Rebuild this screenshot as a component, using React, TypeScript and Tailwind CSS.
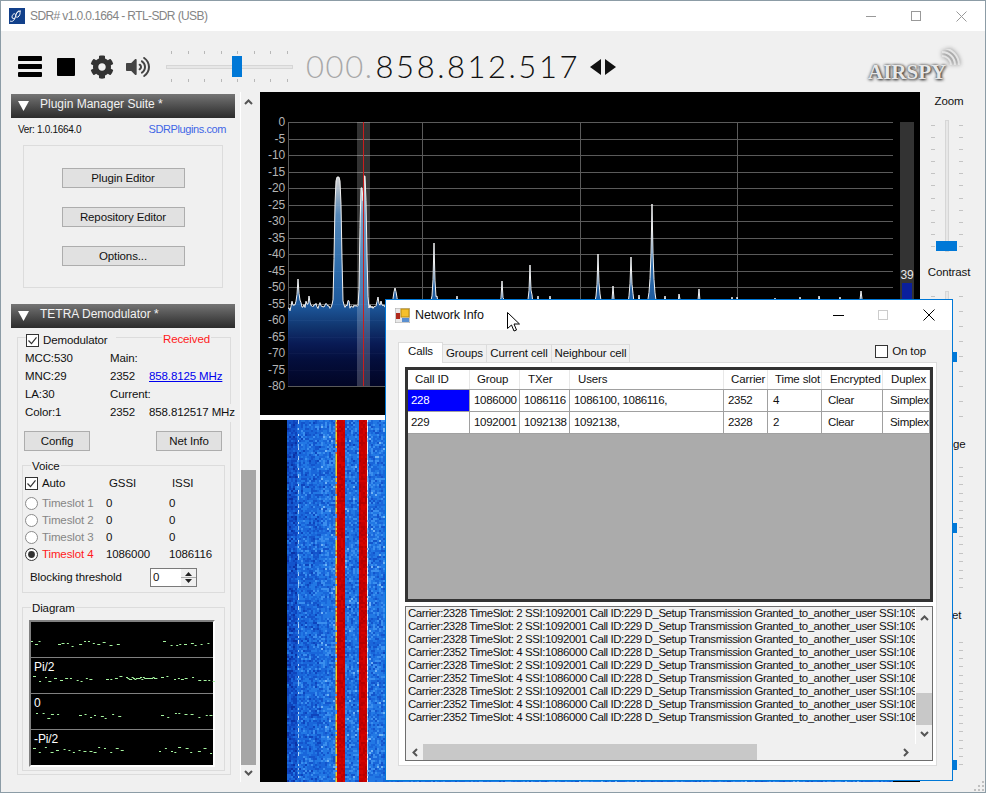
import type { ReactNode } from "react";
import { FaCog, FaVolumeUp } from "react-icons/fa";

const DB_LABELS = Array.from({ length: 17 }, (_, i) => -5 * i);
const SPEC_TOP = 30;
const SPEC_STEP = 16.5;

const PEAKS = [
  { x: 298, top: 279, w: 1.2, p: 1 },
  { x: 309, top: 296, w: 0.9, p: 1 },
  { x: 338, top: 177, w: 4, p: 5 },
  { x: 361.5, top: 186, w: 2, p: 3 },
  { x: 364.5, top: 175, w: 2.5, p: 3 },
  { x: 378, top: 297, w: 0.9, p: 1 },
  { x: 395, top: 288, w: 2.2, p: 2 },
  { x: 434, top: 243, w: 1.1, p: 1 },
  { x: 437, top: 296, w: 0.7, p: 1 },
  { x: 457, top: 296, w: 0.8, p: 1 },
  { x: 502, top: 281, w: 0.9, p: 1 },
  { x: 530, top: 265, w: 1.1, p: 1 },
  { x: 538, top: 296, w: 0.7, p: 1 },
  { x: 550, top: 296, w: 0.7, p: 1 },
  { x: 598, top: 254, w: 1.2, p: 1 },
  { x: 613, top: 286, w: 1, p: 1 },
  { x: 631, top: 257, w: 1.3, p: 1 },
  { x: 639, top: 295, w: 0.8, p: 1 },
  { x: 652, top: 204, w: 1.5, p: 1 },
  { x: 665, top: 296, w: 0.8, p: 1 },
  { x: 679, top: 294, w: 0.8, p: 1 },
  { x: 699, top: 289, w: 0.8, p: 1 },
  { x: 732, top: 297, w: 0.6, p: 1 },
  { x: 737, top: 297, w: 0.6, p: 1 },
  { x: 775, top: 298, w: 0.6, p: 1 },
  { x: 800, top: 297, w: 0.8, p: 1 },
  { x: 819, top: 296, w: 0.8, p: 1 },
  { x: 840, top: 297, w: 1, p: 1 },
  { x: 861, top: 291, w: 0.9, p: 1 },
];

const LOG_LINES = [
  "2328", "2328", "2328", "2352", "2328", "2352", "2328", "2352", "2352",
];

const COLUMNS = "grid grid-cols-[62px_50px_50px_154px_44px_54px_61px_47px]";
const CELL_PADDING = ["pl-[3px]", "pl-1", "pl-1", "pl-1", "pl-1", "pl-[5px]", "pl-[6px]", "pl-[7px]"];

function makeRandom(seed: number) {
  let s = seed;
  return () => {
    s = (s * 1664525 + 1013904223) % 4294967296;
    return s / 4294967296;
  };
}

function spectrumPath() {
  const rand = makeRandom(11);
  const points: string[] = [];
  for (let x = 288; x <= 893; x += 1) {
    const bump = rand() < 0.12 ? 4 : 0;
    const floor = 304.5 + rand() * 4 - bump + (x < 292 ? 3 : 0);
    let y = floor;
    for (const peak of PEAKS) {
      const d = Math.abs(x - peak.x) / peak.w;
      y = Math.min(y, floor - (floor - peak.top) * Math.exp(-(d ** peak.p)));
    }
    points.push(`${x} ${(y - 92).toFixed(1)}`);
  }
  return points;
}

function Spectrum() {
  const points = spectrumPath();
  return (
    <svg className="block shrink-0 bg-black" height={323} width={660} viewBox="260 0 660 323">
      <defs>
        <linearGradient id="spec" x1="0" x2="0" y1="80" y2="294" gradientUnits="userSpaceOnUse">
          <stop offset="0" stopColor="#f4f4f4" />
          <stop offset="0.06" stopColor="#c8d0d8" />
          <stop offset="0.2" stopColor="#5a90c4" />
          <stop offset="0.42" stopColor="#3376b8" />
          <stop offset="0.62" stopColor="#1f5fa8" />
          <stop offset="0.72" stopColor="#123a78" />
          <stop offset="0.8" stopColor="#0a1d5c" />
          <stop offset="0.88" stopColor="#040f40" />
          <stop offset="1" stopColor="#020628" />
        </linearGradient>
      </defs>
      {DB_LABELS.map((db, i) => {
        const y = Math.round(SPEC_TOP + i * SPEC_STEP);
        return (
          <g key={db}>
            <line stroke="#5a5a5a" x1={288} x2={893} y1={y + 0.5} y2={y + 0.5} />
            <text fill="#b4b4b4" fontSize={12} textAnchor="end" x={285} y={y + 4}>
              {db}
            </text>
          </g>
        );
      })}
      <line stroke="#5a5a5a" x1={288.5} x2={288.5} y1={30} y2={294} />
      {[422, 580, 737].map((x) => (
        <line key={x} stroke="#5a5a5a" x1={x + 0.5} x2={x + 0.5} y1={30} y2={294} />
      ))}
      <path d={`M288 294L${points.join("L")}L893 294Z`} fill="url(#spec)" opacity={0.93} />
      <polyline fill="none" points={points.join(" ")} stroke="#f2f2f2" strokeWidth={1} />
      <rect fill="#ffffff" opacity={0.2} x={357} y={30} width={13} height={264} />
      <line stroke="#c81e1e" x1={363.5} x2={363.5} y1={30} y2={294} />
      <rect fill="#333333" x={900} y={30} width={14} height={293} />
      <rect fill="#0a1f9c" x={902} y={191} width={10} height={132} />
      <text fill="#e8e8e8" fontSize={12} textAnchor="middle" x={907} y={187}>
        39
      </text>
    </svg>
  );
}

function waterfallCells() {
  const rand = makeRandom(5);
  const blues = ["#0b33a6", "#0e44bd", "#1354cc", "#1966da", "#2278e4", "#3a8eee", "#6fb2f4"];
  const buckets = new Map<string, string>();
  const add = (color: string, x: number, y: number, w = 2) => {
    buckets.set(color, `${buckets.get(color) ?? ""}M${x} ${y}h${w}v2h-${w}z`);
  };
  for (let row = 0; row < 181; row += 1) {
    const y = row * 2;
    const maxCol = row >= 180 ? 303 : 50;
    for (let col = 0; col < maxCol; col += 1) {
      const x = col * 2;
      const px = 287 + x;
      if ((px >= 337 && px < 344) || (px >= 359 && px < 367)) {
        add(rand() < 0.5 ? "#c80000" : rand() < 0.5 ? "#d40400" : "#b80000", x, y);
      } else {
        const shift = px < 297 ? -0.7 : px < 320 ? 0.7 : 1.3;
        const level = Math.round(rand() * 2.4 + rand() * 2.4 + shift);
        add(blues[Math.max(0, Math.min(6, level))], x, y);
      }
      if (px === 297) {
        add(rand() < 0.8 ? "#b8d8f5" : "#8cc0f0", 11, y, 1);
      }
      if (px === 335) {
        add(rand() < 0.7 ? "#f2d020" : "#e86a10", 48.5, y, 1.5);
      }
      if (px === 367) {
        add(rand() < 0.6 ? "#e8eef5" : "#8cc0f0", 80, y, 1);
      }
    }
  }
  return Array.from(buckets.entries());
}

function Waterfall() {
  const cells = waterfallCells();
  return (
    <div className="flex h-[362px] bg-black pl-[27px]">
      <svg className="block" height={362} width={606} viewBox="0 0 606 362">
        {cells.map(([color, d]) => (
          <path key={color} d={d} fill={color} />
        ))}
      </svg>
    </div>
  );
}

function Button({ children, className }: { children: ReactNode; className: string }) {
  return (
    <div className={`flex h-5 items-center justify-center border border-[#adadad] bg-[#e1e1e1] pt-px ${className}`}>
      {children}
    </div>
  );
}

function Checkbox({ checked }: { checked?: boolean }) {
  return (
    <svg className="shrink-0" height={13} width={13} viewBox="0 0 13 13">
      <rect fill="#fff" height={12} stroke="#333" width={12} x={0.5} y={0.5} />
      {checked && <path d="M2.5 6.5l3 3.2 5-6.4" fill="none" stroke="#333" strokeWidth={1.2} />}
    </svg>
  );
}

function Radio({ selected }: { selected?: boolean }) {
  return (
    <svg className="shrink-0" height={13} width={13} viewBox="0 0 13 13">
      <circle cx={6.5} cy={6.5} fill="#fff" r={6} stroke={selected ? "#333" : "#8a8a8a"} />
      {selected && <circle cx={6.5} cy={6.5} fill="#333" r={3.4} />}
    </svg>
  );
}

function PanelHeader({ title }: { title: string }) {
  return (
    <div className="flex h-6 items-center bg-gradient-to-b from-[#757575] to-[#2c2c2c] pb-[4px] text-[#f2f2f2]">
      <svg className="ml-[7px] mt-[4px]" height={10} width={11} viewBox="0 0 11 10">
        <path d="M0 0h11L5.5 10z" fill="#fff" />
      </svg>
      <span className="ml-[11px] text-[12px] tracking-[0px]">{title}</span>
    </div>
  );
}

function TimeslotRow({ label, gssi, issi, active }: { label: string; gssi: string; issi: string; active?: boolean }) {
  return (
    <div className="grid h-[17px] grid-cols-[17px_64px_63px_1fr] items-center">
      <Radio selected={active} />
      <span className={active ? "text-[#ff1a1a]" : "text-[#858585]"}>{label}</span>
      <span>{gssi}</span>
      <span>{issi}</span>
    </div>
  );
}

type DiagramRowProps = {
  label?: string;
  seed: number;
  baseline: number;
  ranges: number[][];
  dense?: boolean;
};

function DiagramRow({ label, seed, baseline, ranges, dense }: DiagramRowProps) {
  const rand = makeRandom(seed);
  const dots: { x: number; y: number; w: number }[] = [];
  for (const [from, to] of ranges) {
    for (let x = from; x < to; x += 3 + rand() * 5) {
      dots.push({ x, y: baseline + Math.round(rand() * 6 - 3), w: 2 + Math.round(rand()) });
    }
  }
  if (dense) {
    for (let x = 95; x < 125; x += 1.4) {
      dots.push({ x, y: baseline + Math.round(rand() * 2 - 1), w: 2 });
    }
  }
  return (
    <div className="relative h-9 shrink-0 border-b border-[#808080] text-white last:border-b-0">
      {label && <span className="absolute left-[3px] top-0 text-[12px]">{label}</span>}
      <svg className="block" height={35} width={184} viewBox="0 0 184 35">
        {dots.map((dot) => (
          <rect key={`${dot.x}-${dot.y}`} fill="#a6f5a0" height={1} width={dot.w} x={dot.x} y={dot.y} />
        ))}
      </svg>
    </div>
  );
}

function LeftPanel() {
  return (
    <div className="h-[690px] w-[240px] shrink-0 overflow-hidden border-r border-white pl-[10px] pr-[5px] pt-[2px]">
      <PanelHeader title="Plugin Manager Suite *" />
      <div className="mt-1 flex h-[14px] items-center justify-between pl-[7px] pr-[9px]">
        <span className="text-[10px] tracking-[-0.3px]">Ver: 1.0.1664.0</span>
        <span className="text-[11px] tracking-[-0.4px] text-[#3f66e6]">SDRPlugins.com</span>
      </div>
      <div className="ml-3 mt-[9px] flex h-[143px] w-[200px] flex-col items-center gap-[19px] border border-[#dcdcdc] pt-[22px]">
        <Button className="w-[123px]">Plugin Editor</Button>
        <Button className="w-[123px]">Repository Editor</Button>
        <Button className="w-[123px]">Options...</Button>
      </div>
      <div className="mt-4">
        <PanelHeader title="TETRA Demodulator *" />
      </div>
      <div className="relative ml-[6px] mt-[9px] h-[438px] w-[214px] border border-[#dcdcdc]">
        <div className="absolute -top-[6px] left-2 flex items-center gap-1 bg-[#f0f0f0] pr-2">
          <Checkbox checked />
          <span>Demodulator</span>
        </div>
        <span className="absolute -top-[7px] left-[144px] bg-[#f0f0f0] px-px text-[#ff1a1a]">Received</span>
        <div className="grid grid-cols-[85px_39px_1fr] pl-[7px] pt-3 [&>*]:flex [&>*]:h-[18px] [&>*]:items-center">
          <span>MCC:530</span>
          <span>Main:</span>
          <span />
          <span>MNC:29</span>
          <span>2352</span>
          <span className="text-[#0000ee] underline">858.8125 MHz</span>
          <span>LA:30</span>
          <span>Current:</span>
          <span />
          <span>Color:1</span>
          <span>2352</span>
          <span className="relative w-[83px] whitespace-nowrap bg-[#f0f0f0]">858.812517 MHz</span>
        </div>
        <div className="ml-[6px] mt-[9px] flex w-[198px] justify-between">
          <Button className="w-[66px]">Config</Button>
          <Button className="w-[66px]">Net Info</Button>
        </div>
        <div className="relative ml-1 mt-[14px] h-[128px] w-[203px] border border-[#dcdcdc] pl-[2px] pt-[9px]">
          <span className="absolute -top-[8px] left-2 bg-[#f0f0f0] px-px">Voice</span>
          <div className="grid h-4 grid-cols-[17px_67px_63px_1fr] items-center">
            <Checkbox checked />
            <span>Auto</span>
            <span>GSSI</span>
            <span>ISSI</span>
          </div>
          <div className="mt-1">
            <TimeslotRow gssi="0" issi="0" label="Timeslot 1" />
            <TimeslotRow gssi="0" issi="0" label="Timeslot 2" />
            <TimeslotRow gssi="0" issi="0" label="Timeslot 3" />
            <TimeslotRow active gssi="1086000" issi="1086116" label="Timeslot 4" />
          </div>
          <div className="mt-[5px] flex h-[19px] items-center pl-[5px]">
            <span className="w-[120px]">Blocking threshold</span>
            <div className="flex h-[19px] w-[47px] items-center justify-between border border-[#7a7a7a] bg-white pl-[2px]">
              <span>0</span>
              <svg height={17} width={15} viewBox="0 0 15 17">
                <rect fill="#f0f0f0" height={17} width={15} />
                <path d="M7.5 3l3.5 4H4zM7.5 14l3.5-4H4z" fill="#222" />
                <path d="M0 8.5h15" stroke="#aaa" />
              </svg>
            </div>
          </div>
        </div>
        <div className="relative ml-1 mt-[14px] h-[164px] w-[203px] border border-[#dcdcdc] pl-[6px] pt-3">
          <span className="absolute -top-[8px] left-2 bg-[#f0f0f0] px-px">Diagram</span>
          <div className="h-[147px] w-[186px] border-2 border-b-white border-l-[#808080] border-r-white border-t-[#808080] bg-black">
            <DiagramRow baseline={21} ranges={[[0, 12], [27, 88], [132, 184]]} seed={2} />
            <DiagramRow baseline={20} dense label="Pi/2" ranges={[[2, 12], [14, 60], [75, 92], [130, 184]]} seed={7} />
            <DiagramRow baseline={21} label="0" ranges={[[5, 30], [48, 90], [130, 184]]} seed={13} />
            <DiagramRow baseline={20} label="-Pi/2" ranges={[[2, 92], [128, 136], [140, 184]]} seed={4} />
          </div>
        </div>
      </div>
    </div>
  );
}

function Scrollbar() {
  return (
    <div className="flex h-[690px] w-[15px] shrink-0 flex-col items-center">
      <svg className="mt-[7px]" height={6} width={9} viewBox="0 0 9 6">
        <path d="M1 5l3.5-3.5L8 5" fill="none" stroke="#555" strokeWidth={2} />
      </svg>
      <div className="mt-[365px] h-[295px] w-[15px] bg-[#a6a6a6]" />
      <svg className="mt-[5px]" height={6} width={9} viewBox="0 0 9 6">
        <path d="M1 1l3.5 3.5L8 1" fill="none" stroke="#555" strokeWidth={2} />
      </svg>
    </div>
  );
}

type VSliderProps = {
  className: string;
  heightClass: string;
  thumbClass: string;
  ticks: number;
};

function VSlider({ className, heightClass, thumbClass, ticks }: VSliderProps) {
  const marks = Array.from({ length: ticks }, (_, i) => i);
  const column = (
    <div className="flex w-1 flex-col justify-between py-[5px]">
      {marks.map((m) => (
        <div key={m} className="h-px w-1 bg-[#c4c4c4]" />
      ))}
    </div>
  );
  return (
    <div className={`relative mr-1 flex w-[32px] justify-between ${heightClass} ${className}`}>
      {column}
      <div className="h-full w-1 border border-[#d6d6d6] bg-[#e7e7e7]" />
      {column}
      <div className={`absolute left-[5px] h-[10px] w-[21px] bg-[#0078d7] ${thumbClass}`} />
    </div>
  );
}

function RightControls() {
  return (
    <div className="flex w-[58px] shrink-0 flex-col items-center">
      <span className="mt-px leading-4">Zoom</span>
      <VSlider className="mt-[11px]" heightClass="h-[132px]" thumbClass="top-[121px]" ticks={11} />
      <span className="mt-3 leading-4">Contrast</span>
      <VSlider className="mt-[11px]" heightClass="h-[131px]" thumbClass="top-[61px]" ticks={9} />
      <span className="mt-[14px] leading-4">Range</span>
      <VSlider className="mt-[10px]" heightClass="h-[131px]" thumbClass="top-[61px]" ticks={15} />
      <span className="mr-[5px] mt-[14px] leading-4">Offset</span>
      <VSlider className="mt-[14px]" heightClass="h-[133px]" thumbClass="top-[123px]" ticks={16} />
    </div>
  );
}

function TuningSlider() {
  const marks = [0, 1, 2, 3, 4, 5, 6, 7];
  const row = (
    <div className="flex justify-between px-[5px]">
      {marks.map((m) => (
        <div key={m} className="h-[3px] w-px bg-[#b8b8b8]" />
      ))}
    </div>
  );
  return (
    <div className="relative ml-4 flex h-[31px] w-[127px] flex-col justify-between">
      {row}
      <div className="h-1 border border-[#d6d6d6] bg-[#e7e7e7]" />
      {row}
      <div className="absolute left-[66px] top-[5px] h-[21px] w-[10px] bg-[#0078d7]" />
    </div>
  );
}

function AirspyLogo() {
  return (
    <div className="relative ml-auto mr-[25px] mt-[-1px] h-[34px] w-[92px]">
      <span className="absolute bottom-0 left-0 font-['Liberation_Serif',serif] text-[21px] font-bold leading-[22px] tracking-[0px] text-[#e8e8e8] [text-shadow:0_0_3px_#333,1px_1px_3px_#333]">
        AIRSPY
      </span>
      <svg className="absolute right-0 top-0 drop-shadow-[0_0_2px_#666]" height={20} width={20} viewBox="0 0 20 20">
        <path d="M2 7a9 9 0 0 1 9 9M2 3a13 13 0 0 1 13 13M2-1a17 17 0 0 1 17 17" fill="none" stroke="#e4e4e4" strokeWidth={2} />
      </svg>
    </div>
  );
}

function Toolbar() {
  return (
    <div className="flex h-[61px] shrink-0 items-center pl-[17px] pt-[10px]">
      <div className="flex h-[21px] w-6 flex-col justify-between">
        <div className="h-[5px] rounded-[1px] bg-black" />
        <div className="h-[5px] rounded-[1px] bg-black" />
        <div className="h-[5px] rounded-[1px] bg-black" />
      </div>
      <div className="ml-[15px] h-[18px] w-[18px] rounded-[1px] bg-black" />
      <FaCog className="ml-[15px] text-[#333]" size={24} />
      <FaVolumeUp className="ml-3 text-[#444]" size={24} />
      <TuningSlider />
      <div className="ml-[13px] flex w-[310px] items-center font-['Lato',sans-serif] text-[31px] font-light leading-none">
        <span className="tracking-[1.6px] text-[#a8a8a8]">000.</span>
        <span className="ml-[2px] tracking-[2.55px] text-[#111]">858.812.517</span>
        <svg className="ml-auto" height={16} width={26} viewBox="0 0 26 16">
          <path d="M11 0v16L0 8zM15 0v16l11-8z" fill="#111" />
        </svg>
      </div>
      <AirspyLogo />
    </div>
  );
}

function TitleBar() {
  return (
    <div className="flex h-[30px] shrink-0 items-center bg-white pl-2 pr-[18px]">
      <svg height={16} width={16} viewBox="0 0 16 16">
        <rect fill="#12408a" height={16} width={16} />
        <path d="M1 13c2 1 4 0 5-3s2-7 4-7 1 5-1 6-3-1-2-3 3-3 5-3" fill="none" stroke="#fff" strokeWidth={1} />
        <path d="M6 10c-1 1-3 1-3-1s2-4 3-3" fill="none" stroke="#fff" strokeWidth={1} />
      </svg>
      <span className="ml-[5px] text-[12px] tracking-[-0.6px] text-[#858585]">SDR# v1.0.0.1664 - RTL-SDR (USB)</span>
      <div className="ml-auto flex items-center gap-[35px]">
        <svg height={10} width={10} viewBox="0 0 10 10">
          <path d="M0 5.5h10" stroke="#999" />
        </svg>
        <svg height={10} width={10} viewBox="0 0 10 10">
          <rect fill="none" height={9} stroke="#999" width={9} x={0.5} y={0.5} />
        </svg>
        <svg height={11} width={11} viewBox="0 0 11 11">
          <path d="M.5.5l10 10M10.5.5l-10 10" stroke="#999" />
        </svg>
      </div>
    </div>
  );
}

function CallRow({ cells, selected }: { cells: string[]; selected?: boolean }) {
  return (
    <div className={`${COLUMNS} h-[22px] bg-white tracking-[-0.3px]`}>
      {cells.map((cell, i) => (
        <div
          key={`${i}-${cell}`}
          className={`flex items-center whitespace-nowrap border-b border-r border-[#a0a0a0] pt-px ${CELL_PADDING[i]} ${
            selected && i === 0 ? "bg-[#0000ff] text-white" : ""
          }`}
        >
          {cell}
        </div>
      ))}
    </div>
  );
}

function NetworkInfo() {
  const headers = [
    { label: "Call ID", cls: "pl-[7px]" },
    { label: "Group", cls: "pl-[7px]" },
    { label: "TXer", cls: "pl-2" },
    { label: "Users", cls: "pl-2" },
    { label: "Carrier", cls: "pl-[7px]" },
    { label: "Time slot", cls: "pl-[7px]" },
    { label: "Encrypted", cls: "pl-2" },
    { label: "Duplex", cls: "pl-2" },
  ];
  const tabClass = "mt-[2px] flex h-[18px] items-center justify-center border-r border-t border-[#dcdcdc] bg-[#f0f0f0] pt-px";
  return (
    <div className="absolute left-[384px] top-[298px] flex h-[482px] w-[568px] flex-col border border-[#0078d7] bg-[#f0f0f0]">
      <div className="flex h-[30px] shrink-0 items-center bg-white pl-[9px] pr-[17px]">
        <svg height={15} width={15} viewBox="0 0 15 15">
          <rect fill="#e8e8e8" height={15} stroke="#aaa" width={15} />
          <rect fill="#f5c02c" height={8} stroke="#b88a10" width={8} x={6} y={1} />
          <rect fill="#b02a1c" height={6} width={4} x={1} y={5} />
          <rect fill="#5a8fd0" height={4} width={7} x={7} y={10} />
        </svg>
        <span className="ml-[5px] text-[12.5px]">Network Info</span>
        <div className="ml-auto flex items-center gap-[34px]">
          <svg height={10} width={11} viewBox="0 0 11 10">
            <path d="M0 5.5h11" stroke="#000" />
          </svg>
          <svg height={10} width={11} viewBox="0 0 11 10">
            <rect fill="none" height={9} stroke="#ccc" width={9} x={0.5} y={0.5} />
          </svg>
          <svg height={12} width={12} viewBox="0 0 12 12">
            <path d="M.5.5l11 11M11.5.5l-11 11" stroke="#000" />
          </svg>
        </div>
      </div>
      <div className="ml-3 mt-3 w-[539px]">
        <div className="flex h-5 items-start pr-[11px]">
          <div className="relative z-10 flex h-[21px] w-[45px] items-center justify-center border border-b-0 border-[#dcdcdc] bg-white pb-[3px]">
            Calls
          </div>
          <div className={`${tabClass} w-[44px]`}>Groups</div>
          <div className={`${tabClass} w-[65px]`}>Current cell</div>
          <div className={`${tabClass} w-[78px]`}>Neighbour cell</div>
          <div className="ml-auto mt-px flex items-center gap-1">
            <Checkbox />
            <span>On top</span>
          </div>
        </div>
        <div className="h-[404px] border border-[#dcdcdc] bg-white pl-[6px] pt-1">
          <div className="h-[235px] w-[528px] border-[3px] border-[#333] bg-[#ababab]">
            <div className={`${COLUMNS} h-[19px] bg-white`}>
              {headers.map((h) => (
                <div key={h.label} className={`flex items-center whitespace-nowrap border-r border-[#e8e8e8] pt-px ${h.cls}`}>
                  {h.label}
                </div>
              ))}
            </div>
            <div className="h-px bg-[#a0a0a0]" />
            <CallRow
              cells={["228", "1086000", "1086116", "1086100, 1086116,", "2352", "4", "Clear", "Simplex"]}
              selected
            />
            <CallRow cells={["229", "1092001", "1092138", "1092138,", "2328", "2", "Clear", "Simplex"]} />
          </div>
          <div className="mt-1 flex h-[155px] w-[528px] flex-col border border-[#6e6e6e] bg-[#f0f0f0]">
            <div className="flex h-[137px]">
              <div className="w-[510px] overflow-hidden whitespace-nowrap border-r border-white pl-[2px] leading-[13px] tracking-[-0.43px]">
                {LOG_LINES.map((carrier, i) => {
                  const second = carrier === "2328";
                  return (
                    <div key={i}>
                      {`Carrier:${carrier} TimeSlot: ${second ? 2 : 4} SSI:${second ? "1092001" : "1086000"} Call ID:${
                        second ? 229 : 228
                      } D_Setup Transmission Granted_to_another_user SSI:${second ? "1092138" : "1086116"}`}
                    </div>
                  );
                })}
              </div>
              <div className="flex w-4 flex-col items-center pt-2">
                <svg height={6} width={9} viewBox="0 0 9 6">
                  <path d="M1 5l3.5-3.5L8 5" fill="none" stroke="#555" strokeWidth={2} />
                </svg>
                <div className="mt-[72px] h-[32px] w-4 bg-[#c8c8c8]" />
                <svg className="mt-[6px]" height={6} width={9} viewBox="0 0 9 6">
                  <path d="M1 1l3.5 3.5L8 1" fill="none" stroke="#555" strokeWidth={2} />
                </svg>
              </div>
            </div>
            <div className="flex h-4 items-center">
              <svg className="ml-[6px]" height={9} width={6} viewBox="0 0 6 9">
                <path d="M5 1L1.5 4.5 5 8" fill="none" stroke="#555" strokeWidth={2} />
              </svg>
              <div className="ml-[5px] h-4 w-[334px] bg-[#c8c8c8]" />
              <svg className="ml-[146px]" height={9} width={6} viewBox="0 0 6 9">
                <path d="M1 1l3.5 3.5L1 8" fill="none" stroke="#555" strokeWidth={2} />
              </svg>
            </div>
          </div>
        </div>
      </div>
    </div>
  );
}

export default function App() {
  return (
    <div className="relative flex h-[793px] w-[986px] flex-col overflow-hidden border border-[#8c9ca6] bg-[#f0f0f0] font-['Liberation_Sans',sans-serif] text-[11.5px] tracking-[-0.12px] text-[#111]">
      <TitleBar />
      <Toolbar />
      <div className="flex">
        <LeftPanel />
        <Scrollbar />
        <div className="ml-1 w-[660px] shrink-0">
          <Spectrum />
          <div className="h-[5px] bg-white" />
          <Waterfall />
        </div>
        <RightControls />
      </div>
      <NetworkInfo />
      <svg className="absolute left-[506px] top-[311px]" height={20} width={14} viewBox="0 0 14 20">
        <path d="M.5.5v16l4-3.5 2.5 6 2.5-1-2.5-6h5.5z" fill="#fff" stroke="#000" />
      </svg>
      <svg className="absolute bottom-px right-px" height={10} width={10} viewBox="0 0 10 10">
        <path d="M8 0h2v2H8zM4 4h2v2H4zM8 4h2v2H8zM0 8h2v2H0zM4 8h2v2H4zM8 8h2v2H8z" fill="#c0c0c0" />
      </svg>
    </div>
  );
}
